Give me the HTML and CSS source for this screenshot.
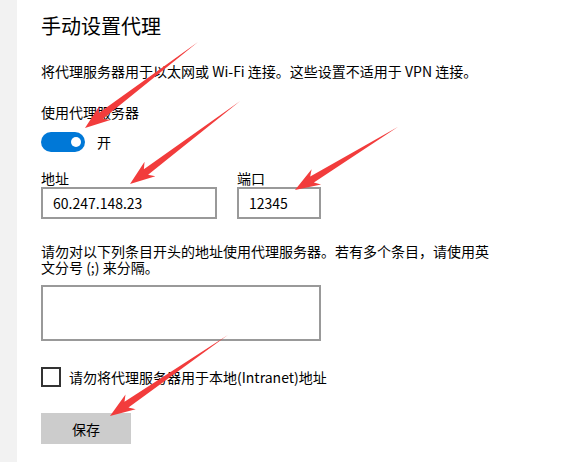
FILE: index.html
```html
<!DOCTYPE html>
<html lang="zh-CN">
<head>
    <meta charset="UTF-8">
    <title>手动设置代理</title>
    <link rel="stylesheet" href="styles.css">
</head>
<body>
    <div class="page">
        <div class="sidebar"></div>
        <div class="content">
            <h1>手动设置代理</h1>
            <p class="desc">将代理服务器用于以太网或 Wi-Fi 连接。这些设置不适用于 VPN 连接。</p>

            <div class="setting-label">使用代理服务器</div>
            <div class="toggle-row">
                <span class="toggle"><span class="knob"></span></span>
                <span class="toggle-text">开</span>
            </div>

            <div class="fields">
                <div class="field">
                    <label for="addr">地址</label>
                    <input id="addr" class="text-input addr" type="text" value="60.247.148.23">
                </div>
                <div class="field">
                    <label for="port">端口</label>
                    <input id="port" class="text-input port" type="text" value="12345">
                </div>
            </div>

            <p class="help">请勿对以下列条目开头的地址使用代理服务器。若有多个条目，请使用英文分号 (;) 来分隔。</p>
            <textarea class="exceptions"></textarea>

            <div class="check-row">
                <span class="checkbox"></span>
                <span>请勿将代理服务器用于本地(Intranet)地址</span>
            </div>

            <button class="save">保存</button>
        </div>
    </div>

    <!-- red annotation arrows -->
    <svg class="marks" width="568" height="462" viewBox="0 0 568 462">
        <g fill="#f23c3c">
            <path transform="translate(85 128) rotate(142.7)" d="M0 0 L-25 -9 L-20 -3.5 L-142 0 L-20 3.5 L-25 9 Z"/>
            <path transform="translate(130 184) rotate(143)" d="M0 0 L-25 -9 L-20 -3.5 L-138 0 L-20 3.5 L-25 9 Z"/>
            <path transform="translate(295 190) rotate(148.5)" d="M0 0 L-25 -9 L-20 -3.5 L-121 0 L-20 3.5 L-25 9 Z"/>
            <path transform="translate(110 416) rotate(145.5)" d="M0 0 L-25 -9 L-20 -3.5 L-143 0 L-20 3.5 L-25 9 Z"/>
        </g>
    </svg>
</body>
</html>
```

FILE: styles.css
```css
/* Reset */
* {
    margin: 0;
    padding: 0;
    box-sizing: border-box;
}
body {
    font-family: "Noto Sans CJK SC", "Noto Sans", sans-serif;
    font-size: 14px;
    color: #000000;
    background-color: #ffffff;
    position: relative;
    overflow: hidden;
}

/* Page frame */
.page {
    display: flex;
    min-height: 462px;
}
.sidebar {
    width: 17px;
    background-color: #f2f2f2;
}
.content {
    padding: 12px 0 0 24px;
    display: flex;
    flex-direction: column;
    align-items: flex-start;
}

/* Title and texts */
h1 {
    font-size: 20px;
    font-weight: normal;
    line-height: 28px;
}
.desc {
    margin-top: 21px;
    line-height: 20px;
}
.setting-label {
    margin-top: 21px;
    line-height: 20px;
}

/* Toggle */
.toggle-row {
    margin-top: 10px;
    display: flex;
    align-items: center;
    gap: 12px;
}
.toggle {
    width: 44px;
    height: 20px;
    border-radius: 10px;
    background-color: #0078d7;
    display: flex;
    align-items: center;
    justify-content: flex-end;
    padding-right: 4px;
}
.knob {
    width: 10px;
    height: 10px;
    border-radius: 50%;
    background-color: #ffffff;
}
.toggle-text {
    line-height: 20px;
}

/* Address / port */
.fields {
    margin-top: 17px;
    display: flex;
    gap: 20px;
}
.field label {
    display: block;
    line-height: 18px;
}
.text-input {
    display: block;
    height: 32px;
    border: 2px solid #999999;
    padding: 0 10px;
    font-family: inherit;
    font-size: 14px;
    color: #000000;
    outline: none;
}
.addr {
    width: 176px;
}
.port {
    width: 84px;
}

/* Exceptions */
.help {
    margin-top: 24px;
    width: 455px;
    line-height: 16px;
}
.exceptions {
    margin-top: 10px;
    width: 280px;
    height: 56px;
    border: 2px solid #999999;
    resize: none;
    outline: none;
}

/* Checkbox */
.check-row {
    margin-top: 26px;
    display: flex;
    align-items: center;
    gap: 8px;
    line-height: 20px;
}
.checkbox {
    width: 20px;
    height: 20px;
    border: 2px solid #333333;
}

/* Save button */
.save {
    margin-top: 26px;
    width: 90px;
    height: 31px;
    border: none;
    background-color: #cccccc;
    font-family: inherit;
    font-size: 14px;
    color: #000000;
}

/* Annotation overlay */
.marks {
    position: absolute;
    top: 0;
    left: 0;
    pointer-events: none;
}
```
